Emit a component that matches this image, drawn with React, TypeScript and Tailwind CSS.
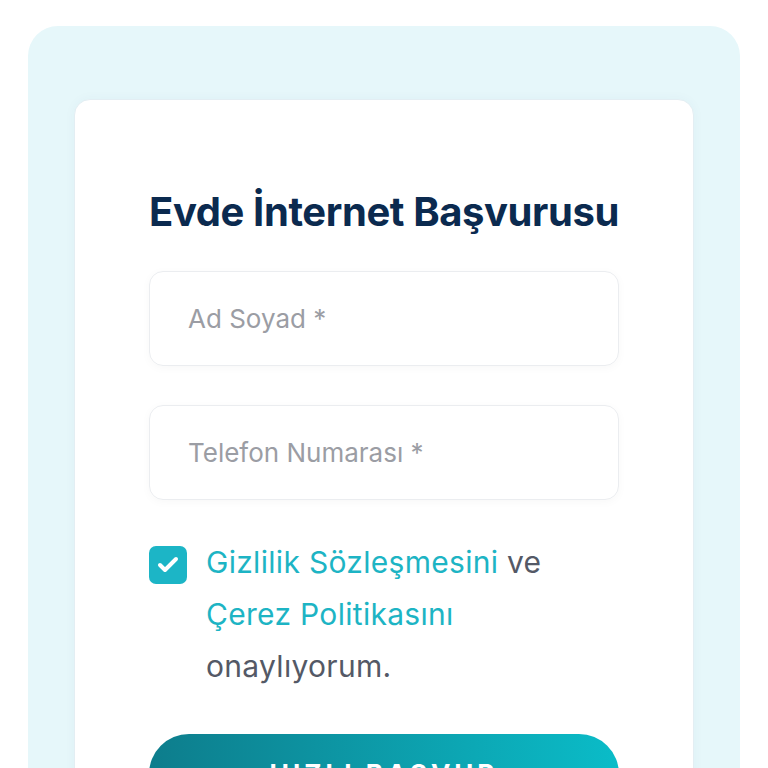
import { Check } from "lucide-react";

export default function App() {
  return (
    <div
      className="min-h-screen bg-white pt-[26px] px-[28px] overflow-hidden"
      style={{ fontFamily: "Inter, 'Noto Sans', sans-serif" }}
    >
      <div className="bg-[#e6f7fa] rounded-t-[30px] pt-[73px] px-[46px] h-[760px]">
        <div className="bg-white rounded-t-[16px] border border-[#e3eef3] shadow-[0_0_12px_rgba(0,80,120,0.04)] px-[74px] pt-[88px] h-[700px]">
          <h1 className="text-[#0b2a4f] text-[40px] font-bold tracking-[-0.4px] leading-[48px] whitespace-nowrap">
            Evde İnternet Başvurusu
          </h1>

          <div className="mt-[35px] flex flex-col gap-[39px]">
            <div className="h-[95px] rounded-[14px] border border-[#ebedf0] shadow-[0_2px_10px_rgba(0,0,0,0.03)] flex items-center px-[38px]">
              <span className="text-[#9b9da4] text-[26px]">Ad Soyad *</span>
            </div>
            <div className="h-[95px] rounded-[14px] border border-[#ebedf0] shadow-[0_2px_10px_rgba(0,0,0,0.03)] flex items-center px-[38px]">
              <span className="text-[#9b9da4] text-[26px]">Telefon Numarası *</span>
            </div>
          </div>

          <div className="mt-[36px] flex gap-[19px]">
            <div className="mt-[10px] w-[38px] h-[38px] shrink-0 rounded-[7px] bg-[#1cb5c6] flex items-center justify-center">
              <Check className="w-[24px] h-[24px] text-white" strokeWidth={4} />
            </div>
            <p className="text-[30px] leading-[52px] text-[#545966] tracking-[0.3px]">
              <span className="text-[#1db4c4]">Gizlilik Sözleşmesini</span> ve
              <br />
              <span className="text-[#1db4c4]">Çerez Politikasını</span>
              <br />
              onaylıyorum.
            </p>
          </div>

          <button className="mt-[42px] w-full h-[90px] rounded-[40px] bg-gradient-to-r from-[#0d7d8c] to-[#0abcc8] text-white text-[26px] font-bold tracking-[4px] flex items-start justify-center pt-[20px]">
            HIZLI BAŞVUR
          </button>
        </div>
      </div>
    </div>
  );
}
